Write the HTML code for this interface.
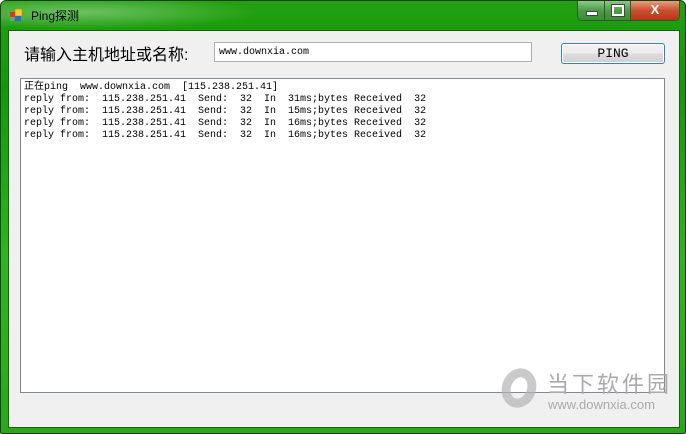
<!DOCTYPE html>
<html><head><meta charset="utf-8"><style>
body{margin:0;width:686px;height:434px;overflow:hidden;background:#fff;font-family:"Liberation Sans","Noto Sans CJK SC",sans-serif}
.win{position:absolute;left:0;top:0;width:684px;height:432px;border:1px solid #1a3a10;border-radius:6px 6px 2px 2px;background:linear-gradient(180deg,#22a010 0%,#12990a 20%,#2fb51f 60%,#2aa81a 100%)}
.glow{position:absolute;left:0;top:0;width:260px;height:28px;background:radial-gradient(ellipse at 30% 40%,rgba(255,255,255,.35),rgba(255,255,255,0) 70%)}
.title{position:absolute;left:30px;top:6px;font-size:12px;color:#000}
.icon{position:absolute;left:9px;top:8px;width:13px;height:13px}
.client{position:absolute;left:7px;top:29px;width:670px;height:396px;background:#f0f0f0;border:1px solid #1c5e10}
.btns{position:absolute;left:576px;top:0;width:101px;height:19px;border:1px solid #2d5a2a;border-top:none;border-radius:0 0 5px 5px;overflow:hidden;display:flex}
.b{height:19px;background:linear-gradient(#8fc98a,#4e9a48 50%,#3c8c36);border-right:1px solid #2d5a2a;position:relative}
.x{background:linear-gradient(#e6a080,#c9502c 50%,#b8361a)}
.lbl{position:absolute;left:24px;top:41px;font-size:16px;color:#000}
.inp{position:absolute;left:214px;top:42px;width:318px;height:20px;background:#fff;border:1px solid #abadb3;font-family:"Liberation Mono",monospace;font-size:10px;line-height:20px;padding-left:4px;box-sizing:border-box}
.ping{position:absolute;left:561px;top:43px;width:102px;height:19px;border:1px solid #3c7fb1;border-radius:3px;background:linear-gradient(#f2f2f2,#ebebeb 50%,#dddddd 51%,#cfcfcf);box-shadow:inset 0 0 0 1px #fff;font-family:"Liberation Mono",monospace;font-size:13px;text-align:center;line-height:19px}
.out{position:absolute;left:20px;top:78px;width:645px;height:315px;background:#fff;border:1px solid #828790;box-sizing:border-box}
pre{margin:0;position:absolute;left:3px;top:3px;font-family:"Liberation Mono","Noto Sans CJK SC",monospace;font-size:10px;line-height:12px;color:#000}
.wm{position:absolute;left:500px;top:365px;color:#bbb}
</style></head><body>
<div class="win"><div class="glow"></div>
<svg class="icon" viewBox="0 0 13 13"><rect x="0" y="3" width="5" height="5" fill="#d33"/><rect x="5" y="0" width="7" height="7" fill="#fc3" stroke="#a70" stroke-width=".5"/><rect x="5" y="7" width="6" height="5" fill="#36c"/><rect x="0" y="8" width="4" height="4" fill="#6a6"/></svg>
<div class="title">Ping探测</div>
<div class="btns"><div class="b" style="width:26px"><div style="position:absolute;left:8px;top:10px;width:10px;height:3px;background:#fff;border:1px solid #444"></div></div><div class="b" style="width:25px"><div style="position:absolute;left:7px;top:4px;width:8px;height:7px;border:2px solid #fff;outline:1px solid #444"></div></div><div class="b x" style="width:48px;border:none;color:#fff;font-weight:bold;font-size:13px;text-align:center;line-height:18px">X</div></div>
<div class="client"></div>
</div>
<div class="lbl">请输入主机地址或名称:</div>
<div class="inp">www.downxia.com</div>
<div class="ping">PING</div>
<div class="out"><pre>正在ping  www.downxia.com  [115.238.251.41]
reply from:  115.238.251.41  Send:  32  In  31ms;bytes Received  32
reply from:  115.238.251.41  Send:  32  In  15ms;bytes Received  32
reply from:  115.238.251.41  Send:  32  In  16ms;bytes Received  32
reply from:  115.238.251.41  Send:  32  In  16ms;bytes Received  32</pre></div>
<div class="wm"><div style="position:absolute;left:2px;top:3px;width:34px;height:40px;border:9px solid rgba(180,180,180,.7);border-radius:50%;transform:rotate(20deg);box-sizing:border-box"></div><div style="position:absolute;left:47px;top:2px;font-size:22px;letter-spacing:3px;white-space:nowrap;color:#aaa">当下软件园</div><div style="position:absolute;left:48px;top:32px;font-size:13px;white-space:nowrap;color:#aaa">www.downxia.com</div></div>
</body></html>
